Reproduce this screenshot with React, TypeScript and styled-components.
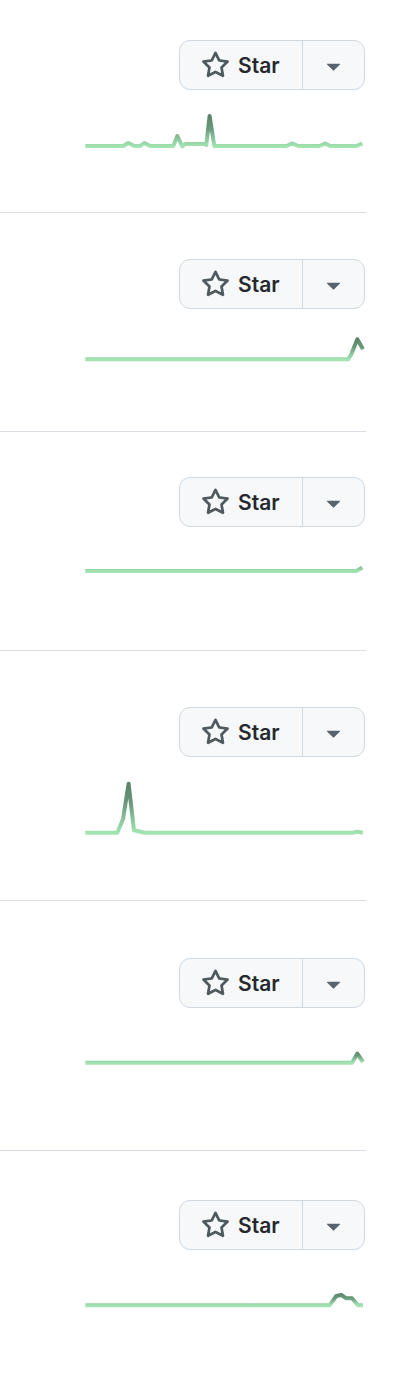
import React from "react";
import styled, { createGlobalStyle } from "styled-components";

const Global = createGlobalStyle`
  html, body { margin: 0; padding: 0; background: #ffffff; }
  body { font-family: Inter, "Liberation Sans", Arial, sans-serif; color: #1f2328; }
`;

const Page = styled.div`
  width: 366px;
  display: flex;
  flex-direction: column;
`;

const Row = styled.article<{ $pt: number; $h: number; $last?: boolean }>`
  box-sizing: border-box;
  height: ${(p) => p.$h}px;
  padding-top: ${(p) => p.$pt}px;
  border-bottom: ${(p) => (p.$last ? "none" : "1px solid #d8dee4")};
  display: flex;
  justify-content: flex-end;
`;

const Side = styled.div`
  display: flex;
  flex-direction: column;
  align-items: flex-end;
`;

const ButtonGroup = styled.div`
  display: flex;
  height: 50px;
  box-sizing: border-box;
  border: 1px solid #d1d9e0;
  border-radius: 11px;
  background: #f6f8fa;
  overflow: hidden;
  margin-right: 1px;
`;

const StarButton = styled.button`
  display: flex;
  align-items: center;
  gap: 8px;
  width: 123px;
  box-sizing: border-box;
  padding: 0 0 0 21px;
  border: none;
  border-right: 1px solid #d1d9e0;
  background: transparent;
  font-family: Inter, "Liberation Sans", Arial, sans-serif;
  font-size: 21px;
  font-weight: 600;
  color: #25292e;
  cursor: pointer;
`;

const CaretButton = styled.button`
  display: flex;
  align-items: center;
  justify-content: center;
  width: 61px;
  border: none;
  background: transparent;
  padding: 0;
  cursor: pointer;
`;

const Spark = styled.svg`
  display: block;
  width: 281px;
  overflow: visible;
`;

const StarIcon = () => (
  <svg width="29" height="29" viewBox="0 0 16 16" fill="#4f5a5f" aria-hidden>
    <path d="M8 .25a.75.75 0 0 1 .673.418l1.882 3.815 4.21.612a.75.75 0 0 1 .416 1.279l-3.046 2.97.719 4.192a.751.751 0 0 1-1.088.791L8 12.347l-3.766 1.98a.75.75 0 0 1-1.088-.79l.72-4.194L.818 6.374a.75.75 0 0 1 .416-1.28l4.21-.611L7.327.668A.75.75 0 0 1 8 .25Zm0 2.445L6.615 5.5a.75.75 0 0 1-.564.41l-3.097.45 2.24 2.184a.75.75 0 0 1 .216.664l-.528 3.084 2.769-1.456a.75.75 0 0 1 .698 0l2.77 1.456-.53-3.084a.75.75 0 0 1 .216-.664l2.24-2.183-3.096-.45a.75.75 0 0 1-.564-.41L8 2.694Z" />
  </svg>
);

const CaretIcon = () => (
  <svg width="29" height="29" viewBox="0 0 16 16" fill="#59636e" aria-hidden>
    <path d="m4.427 7.427 3.396 3.396a.25.25 0 0 0 .354 0l3.396-3.396A.25.25 0 0 0 11.396 7H4.604a.25.25 0 0 0-.177.427Z" />
  </svg>
);

type Pt = [number, number];

const Sparkline = ({ id, points, height }: { id: string; points: Pt[]; height: number }) => {
  const ys = points.map((p) => p[1]);
  const base = Math.max(...ys);
  const top = Math.min(Math.min(...ys), base - 12);
  const d = points.map((p) => `${p[0] + 0.3},${p[1]}`).join(" ");
  return (
    <Spark height={height} viewBox={`0 0 281 ${height}`}>
      <defs>
        <linearGradient id={id} gradientUnits="userSpaceOnUse" x1="0" y1={base} x2="0" y2={top}>
          <stop offset="0%" stopColor="#a2e4b1" />
          <stop offset="25%" stopColor="#8cc79d" />
          <stop offset="60%" stopColor="#6a987b" />
          <stop offset="100%" stopColor="#5a8569" />
        </linearGradient>
      </defs>
      <polyline
        points={d}
        fill="none"
        stroke={`url(#${id})`}
        strokeWidth={4}
        strokeLinejoin="round"
        strokeLinecap="butt"
      />
    </Spark>
  );
};

const rows: { pt: number; h: number; sh: number; pts: Pt[] }[] = [
  {
    pt: 40,
    h: 213,
    sh: 60,
    pts: [
      [0, 56], [38, 56], [43, 53], [49, 56], [55, 56], [59, 53], [65, 56], [88, 56],
      [92, 46], [97, 56.5], [100, 54], [120, 54], [121, 55], [124.3, 26], [129, 56],
      [201, 56], [207, 53.5], [213, 56], [234, 56], [240, 53.5], [245, 56], [271, 56], [277, 53.5],
    ],
  },
  {
    pt: 46,
    h: 219,
    sh: 54,
    pts: [[0, 50.3], [262.7, 50.3], [266, 45.3], [272, 30.3], [277.7, 40.3]],
  },
  {
    pt: 45,
    h: 219,
    sh: 48,
    pts: [[0, 44], [271, 44], [277, 40.7]],
  },
  {
    pt: 56,
    h: 250,
    sh: 80,
    pts: [
      [0, 75.7], [32, 75.7], [37.7, 62.3], [43.3, 26.7], [48.7, 73.3], [59.3, 75.7],
      [267.7, 75.7], [272, 74.7], [277.7, 75.7],
    ],
  },
  {
    pt: 57,
    h: 250,
    sh: 59,
    pts: [[0, 54.7], [266.7, 54.7], [272, 45.7], [277.7, 54]],
  },
  {
    pt: 49,
    h: 225,
    sh: 60,
    pts: [
      [0, 55.3], [244.3, 55.3], [251, 46], [256, 45], [261, 48.3], [266.7, 48.3],
      [272.7, 55.3], [277.7, 55.3],
    ],
  },
];

export default function App() {
  return (
    <>
      <Global />
      <Page>
        {rows.map((r, i) => (
          <Row key={i} $pt={r.pt} $h={r.h} $last={i === rows.length - 1}>
            <Side>
              <ButtonGroup>
                <StarButton type="button">
                  <StarIcon />
                  <span>Star</span>
                </StarButton>
                <CaretButton type="button" aria-label="Add this repository to a list">
                  <CaretIcon />
                </CaretButton>
              </ButtonGroup>
              <Sparkline id={`spark-${i}`} points={r.pts} height={r.sh} />
            </Side>
          </Row>
        ))}
      </Page>
    </>
  );
}
